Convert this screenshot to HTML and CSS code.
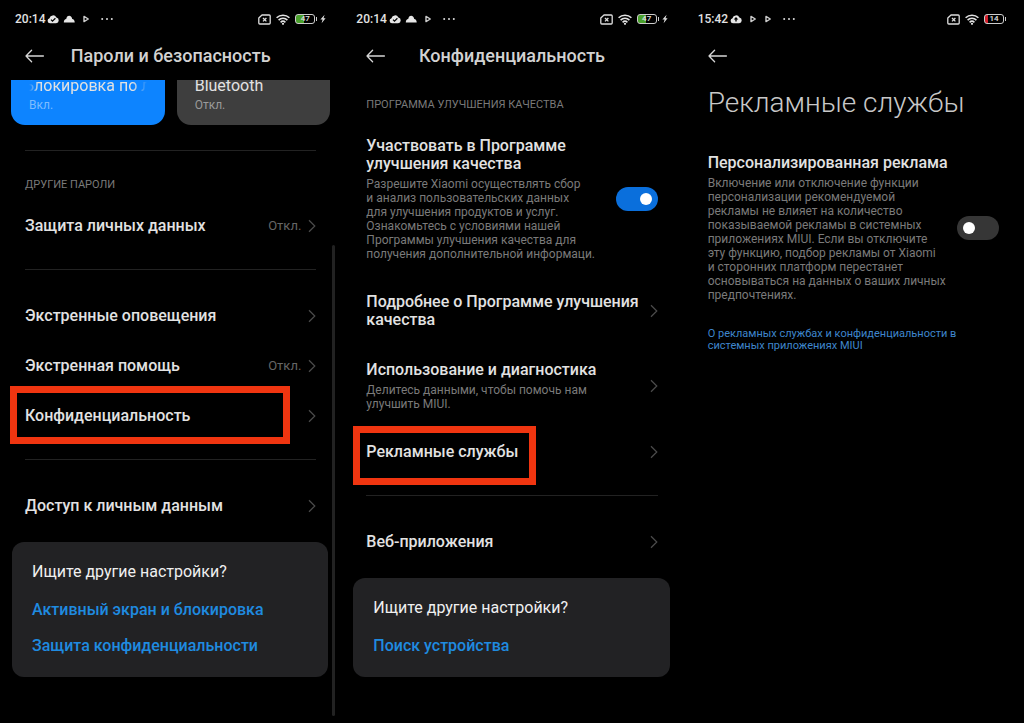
FILE: index.html
```html
<!DOCTYPE html>
<html lang="ru">
<head>
    <meta charset="UTF-8">
    <meta name="viewport" content="width=device-width, initial-scale=1.0">
    <title>Настройки MIUI</title>
    <link rel="stylesheet" href="styles.css">
</head>
<body>
    <!-- общие иконки -->
    <svg class="sprite" aria-hidden="true">
        <symbol id="cloud-check" viewBox="0 0 12 10">
            <path fill="#e6e6e6" d="M3 9.3a2.6 2.6 0 0 1-.5-5.1A3.7 3.7 0 0 1 9.4 3.4a3 3 0 0 1-.3 5.9z"/>
            <path fill="none" stroke="#000" stroke-width="1.2" d="M4 5.6l1.5 1.5L8.4 4.3"/>
        </symbol>
        <symbol id="cloud-up" viewBox="0 0 12 10">
            <path fill="#e6e6e6" d="M3 9.3a2.6 2.6 0 0 1-.5-5.1A3.7 3.7 0 0 1 9.4 3.4a3 3 0 0 1-.3 5.9z"/>
            <path fill="#000" d="M6 3l2.3 2.6H6.7v2H5.3v-2H3.7z"/>
        </symbol>
        <symbol id="cloud" viewBox="0 0 12 10">
            <path fill="#e6e6e6" d="M.8 8.4c0-1.900 1-3.100 2.400-3.300C3.500 3 4.700 1.800 6.100 1.800c1.700 0 2.900 1.300 3.100 3.200 1.500.2 2.500 1.500 2.500 3.400z"/>
        </symbol>
        <symbol id="play" viewBox="0 0 8 8">
            <path fill="none" stroke="#ccc" stroke-width="1.4" stroke-linejoin="round" d="M2 1.4L6.3 4 2 6.6z"/>
        </symbol>
        <symbol id="dots" viewBox="0 0 12 4">
            <g fill="#ddd"><circle cx="1.2" cy="2" r="1"/><circle cx="6" cy="2" r="1"/><circle cx="10.8" cy="2" r="1"/></g>
        </symbol>
        <symbol id="sim" viewBox="0 0 13 11">
            <path fill="none" stroke="#ddd" stroke-width="1.3" stroke-linejoin="round" d="M4 1h7.2q1 0 1 1v7q0 1-1 1H1.8q-1 0-1-1V4z"/>
            <path stroke="#ddd" stroke-width="1.3" d="M5 4l3.4 3.4M8.4 4L5 7.4"/>
        </symbol>
        <symbol id="wifi" viewBox="0 0 14 11">
            <g fill="none" stroke="#e2e2e2" stroke-width="1.6">
                <path d="M.6 3.800a9.200 9.200 0 0 1 12.800 0"/>
                <path d="M2.600 6.100a6.300 6.300 0 0 1 8.800 0"/>
                <path d="M4.600 8.300a3.500 3.500 0 0 1 4.800 0"/>
            </g>
            <circle cx="7" cy="9.800" r="1.100" fill="#e2e2e2"/>
        </symbol>
        <symbol id="bolt" viewBox="0 0 6 10">
            <path fill="#ddd" d="M4.6.8L.4 5.6h2.2L1.6 9.3l4-5H3.5z"/>
        </symbol>
        <symbol id="back" viewBox="0 0 20 14">
            <path fill="none" stroke="#d6d6d6" stroke-width="1.3" stroke-linecap="round" stroke-linejoin="round" d="M6.600 1.200L1 7l5.600 5.800M1 7h17.400"/>
        </symbol>
        <symbol id="chevron" viewBox="0 0 8 14">
            <path fill="none" stroke="#4c4c4c" stroke-width="1.2" d="M1 1.300L6.800 7 1 12.700"/>
        </symbol>
    </svg>

    <main class="screens">
        <section class="screen">
            <div class="statusbar">
                <span class="time">20:14</span>
                <svg class="i-cloud"><use href="#cloud-check"/></svg>
                <svg class="i-cloud"><use href="#cloud"/></svg>
                <svg class="i-play"><use href="#play"/></svg>
                <svg class="i-dots"><use href="#dots"/></svg>
                <div class="indicators">
                    <svg class="i-sim"><use href="#sim"/></svg>
                    <svg class="i-wifi"><use href="#wifi"/></svg>
                    <span class="battery charging">47</span>
                    <svg class="i-bolt"><use href="#bolt"/></svg>
                </div>
            </div>
            <header class="header">
                <button class="back" aria-label="Назад"><svg><use href="#back"/></svg></button>
                <h1>Пароли и безопасность</h1>
            </header>

            <div class="tiles">
                <button class="tile active">
                    <span class="tile-title marquee">Блокировка по лицу</span>
                    <span class="tile-state">Вкл.</span>
                </button>
                <button class="tile">
                    <span class="tile-title">Bluetooth</span>
                    <span class="tile-state">Откл.</span>
                </button>
            </div>

            <div class="list">
                <hr class="first">
                <h2>ДРУГИЕ ПАРОЛИ</h2>
                <a class="row" href="#"><span class="title">Защита личных данных</span><span class="value">Откл.</span><svg class="chevron"><use href="#chevron"/></svg></a>
                <hr>
                <a class="row" href="#"><span class="title">Экстренные оповещения</span><svg class="chevron"><use href="#chevron"/></svg></a>
                <a class="row" href="#"><span class="title">Экстренная помощь</span><span class="value">Откл.</span><svg class="chevron"><use href="#chevron"/></svg></a>
                <a class="row marked" href="#"><span class="title">Конфиденциальность</span><svg class="chevron"><use href="#chevron"/></svg></a>
                <hr>
                <a class="row" href="#"><span class="title">Доступ к личным данным</span><svg class="chevron"><use href="#chevron"/></svg></a>
            </div>

            <div class="card">
                <p>Ищите другие настройки?</p>
                <a href="#">Активный экран и блокировка</a>
                <a href="#">Защита конфиденциальности</a>
            </div>
            <div class="scrollbar"></div>
        </section>

        <section class="screen">
            <div class="statusbar">
                <span class="time">20:14</span>
                <svg class="i-cloud"><use href="#cloud-check"/></svg>
                <svg class="i-cloud"><use href="#cloud"/></svg>
                <svg class="i-play"><use href="#play"/></svg>
                <svg class="i-dots"><use href="#dots"/></svg>
                <div class="indicators">
                    <svg class="i-sim"><use href="#sim"/></svg>
                    <svg class="i-wifi"><use href="#wifi"/></svg>
                    <span class="battery charging">47</span>
                    <svg class="i-bolt"><use href="#bolt"/></svg>
                </div>
            </div>
            <header class="header">
                <button class="back" aria-label="Назад"><svg><use href="#back"/></svg></button>
                <h1>Конфиденциальность</h1>
            </header>

            <div class="list list-top">
                <h2>ПРОГРАММА УЛУЧШЕНИЯ КАЧЕСТВА</h2>
                <div class="row">
                    <label class="text" for="quality">
                        <span class="title">Участвовать в Программе<br>улучшения качества</span>
                        <span class="desc">Разрешите Xiaomi осуществлять сбор<br>и анализ пользовательских данных<br>для улучшения продуктов и услуг.<br>Ознакомьтесь с условиями нашей<br>Программы улучшения качества для<br>получения дополнительной информаци.</span>
                    </label>
                    <input class="switch" type="checkbox" id="quality" checked>
                </div>
                <a class="row" href="#"><span class="title">Подробнее о Программе улучшения<br>качества</span><svg class="chevron"><use href="#chevron"/></svg></a>
                <a class="row" href="#">
                    <span class="text">
                        <span class="title">Использование и диагностика</span>
                        <span class="desc">Делитесь данными, чтобы помочь нам<br>улучшить MIUI.</span>
                    </span>
                    <svg class="chevron"><use href="#chevron"/></svg>
                </a>
                <a class="row marked marked-short" href="#"><span class="title">Рекламные службы</span><svg class="chevron"><use href="#chevron"/></svg></a>
                <hr>
                <a class="row" href="#"><span class="title">Веб-приложения</span><svg class="chevron"><use href="#chevron"/></svg></a>
            </div>

            <div class="card">
                <p>Ищите другие настройки?</p>
                <a href="#">Поиск устройства</a>
            </div>
        </section>

        <section class="screen">
            <div class="statusbar">
                <span class="time">15:42</span>
                <svg class="i-cloud"><use href="#cloud-up"/></svg>
                <svg class="i-play"><use href="#play"/></svg>
                <svg class="i-play"><use href="#play"/></svg>
                <svg class="i-dots"><use href="#dots"/></svg>
                <div class="indicators">
                    <svg class="i-sim"><use href="#sim"/></svg>
                    <svg class="i-wifi"><use href="#wifi"/></svg>
                    <span class="battery low">14</span>
                </div>
            </div>
            <header class="header">
                <button class="back" aria-label="Назад"><svg><use href="#back"/></svg></button>
            </header>

            <div class="list">
                <h1 class="big-title">Рекламные службы</h1>
                <div class="row">
                    <label class="text" for="ads">
                        <span class="title">Персонализированная реклама</span>
                        <span class="desc">Включение или отключение функции<br>персонализации рекомендуемой<br>рекламы не влияет на количество<br>показываемой рекламы в системных<br>приложениях MIUI. Если вы отключите<br>эту функцию, подбор рекламы от Xiaomi<br>и сторонних платформ перестанет<br>основываться на данных о ваших личных<br>предпочтениях.</span>
                    </label>
                    <input class="switch" type="checkbox" id="ads">
                </div>
                <a class="more" href="#">О рекламных службах и конфиденциальности в<br>системных приложениях MIUI</a>
            </div>
        </section>
    </main>
</body>
</html>
```

FILE: styles.css
```css
* {
    box-sizing: border-box;
}

body {
    margin: 0;
    background: #000;
    color: #e2e2e2;
    font-family: Roboto, "Noto Sans", sans-serif;
    font-size: 16px;
    line-height: 18px;
}

a {
    color: inherit;
    text-decoration: none;
}

button {
    border: none;
    background: none;
    padding: 0;
    color: inherit;
    font: inherit;
    text-align: left;
}

h1, h2, p {
    margin: 0;
}

.sprite {
    position: absolute;
    width: 0;
    height: 0;
}

.screens {
    display: grid;
    grid-template-columns: repeat(3, 1fr);
    min-height: 100vh;
}

.screen {
    position: relative;
    min-width: 0;
}

/* строка состояния */
.statusbar {
    display: flex;
    align-items: center;
    height: 38px;
    padding: 0 15px;
}

.time {
    margin-right: 2px;
    font-size: 12px;
    font-weight: 500;
}

.i-cloud {
    width: 12px;
    height: 10px;
    margin-right: 4px;
}

.i-play {
    width: 8px;
    height: 8px;
    margin: 0 4px 0 3px;
}

.i-dots {
    width: 12px;
    height: 4px;
    margin-left: 7px;
}

.indicators {
    display: flex;
    align-items: center;
    gap: 5px;
    margin-left: auto;
}

.i-sim {
    width: 13px;
    height: 11px;
}

.i-wifi {
    width: 14px;
    height: 11px;
}

.i-bolt {
    width: 6px;
    height: 10px;
}

.battery {
    position: relative;
    width: 20px;
    height: 10px;
    border: 1px solid #ccc;
    border-radius: 3px;
    font-size: 8px;
    font-weight: 500;
    line-height: 8px;
    text-align: center;
}

.battery::after {
    content: "";
    position: absolute;
    top: 2px;
    right: -3px;
    width: 1px;
    height: 4px;
    background: #ccc;
}

.battery.charging {
    background: linear-gradient(to right, #4aa02c 45%, #000 45%);
}

.battery.low {
    margin-right: 5px;
    background: linear-gradient(to right, #d3202c 16%, #000 16%);
}

/* шапка */
.header {
    display: grid;
    grid-template-columns: 20px 1fr 20px;
    align-items: center;
    height: 36px;
    padding: 0 25px;
}

.header h1 {
    font-size: 18px;
    font-weight: 500;
    text-align: center;
    color: #d2d2d2;
}

.back svg {
    display: block;
    width: 20px;
    height: 14px;
}

/* плитки, прокрученные под шапку */
.tiles {
    display: flex;
    align-items: flex-end;
    gap: 12px;
    height: 45px;
    margin: 6px 11px 0;
    overflow: hidden;
}

.tile {
    flex: 1;
    min-width: 0;
    padding: 18px;
    padding-bottom: 13px;
    border-radius: 14px;
    background: #3e3e3e;
}

.tile.active {
    background: #0d84ff;
}

.tile-title {
    display: block;
    line-height: 20px;
}

.tile-state {
    display: block;
    margin-top: 2px;
    font-size: 12px;
    line-height: 14px;
    color: #9a9a9a;
}

.active .tile-state {
    color: #7dbcff;
}

.marquee {
    overflow: hidden;
    white-space: nowrap;
    text-indent: -5px;
    -webkit-mask-image: linear-gradient(to right, transparent, #000 8%, #000 88%, transparent);
    mask-image: linear-gradient(to right, transparent, #000 8%, #000 88%, transparent);
}

/* список настроек */
.list {
    padding: 0 25px;
}

.list-top {
    padding-top: 24px;
}

hr {
    height: 1px;
    margin: 18px 0 21px;
    border: none;
    background: #222;
}

hr.first {
    margin: 25px 0 27px;
}

h2 {
    margin-bottom: 9px;
    font-size: 11px;
    font-weight: 400;
    line-height: 14px;
    color: #7a7a7a;
}

.row {
    position: relative;
    display: flex;
    align-items: center;
    justify-content: space-between;
    padding: 16px 0;
}

.title {
    display: block;
    flex: 1;
    font-weight: 500;
    white-space: nowrap;
}

.desc {
    display: block;
    margin-top: 4px;
    font-size: 12px;
    line-height: 14px;
    white-space: nowrap;
    color: #7a7a7a;
}

.value {
    margin-right: 7px;
    font-size: 13px;
    color: #666;
}

.chevron {
    flex: none;
    width: 8px;
    height: 14px;
}

/* красная рамка вокруг нужного пункта */
.marked::after {
    content: "";
    position: absolute;
    top: -5px;
    bottom: -3px;
    left: -15px;
    right: 26px;
    border: 7px solid #f03510;
}

.marked-short::after {
    top: -1px;
    bottom: -8px;
    left: -13px;
    right: 122px;
}

.switch {
    appearance: none;
    flex: none;
    width: 42px;
    height: 24px;
    margin: 0;
    padding: 6px;
    border-radius: 12px;
    background: #363636;
}

.switch::before {
    content: "";
    display: block;
    width: 12px;
    height: 12px;
    border-radius: 50%;
    background: #fff;
}

.switch:checked {
    background: #0a6fdc;
}

.switch:checked::before {
    margin-left: auto;
}

.card {
    display: flex;
    flex-direction: column;
    gap: 18px;
    margin: 11px 13px 0 12px;
    padding: 21px 20px 22px;
    border-radius: 12px;
    background: #222224;
}

.card p {
    margin-bottom: 2px;
    color: #f0f0f0;
}

.card a {
    font-weight: 500;
    color: #1f8be0;
}

.scrollbar {
    position: absolute;
    top: 245px;
    bottom: 7px;
    right: 6px;
    width: 3px;
    border-radius: 2px;
    background: #222;
}

.big-title {
    margin: 11px 0 17px;
    font-size: 28px;
    font-weight: 300;
    line-height: 36px;
    white-space: nowrap;
    color: #c8c8c8;
}

.more {
    display: block;
    margin-top: 10px;
    font-size: 11px;
    line-height: 12px;
    white-space: nowrap;
    color: #3f86cc;
}
```
